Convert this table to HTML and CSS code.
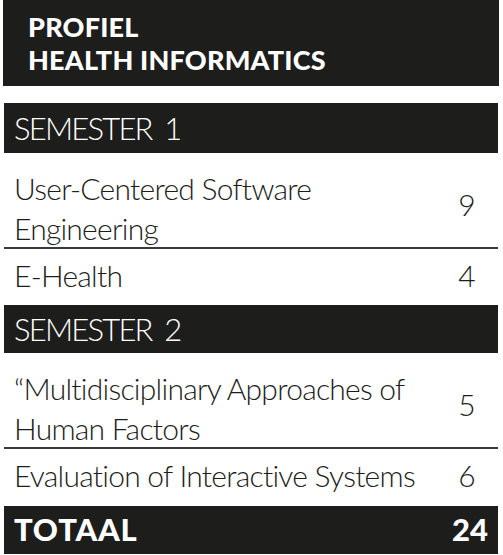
FILE: index.html
```html
<!DOCTYPE html>
<html lang="nl">
<head>
<meta charset="utf-8">
<title>Profiel Health Informatics</title>
<link rel="stylesheet" href="styles.css">
</head>
<body>
  <header class="title">
    <h1>PROFIEL<br>HEALTH INFORMATICS</h1>
  </header>
  <section class="table">
    <div class="semester semester-first">SEMESTER 1</div>
    <div class="row row-tall">
      <span class="course">User-Centered Software<br>Engineering</span>
      <span class="ec">9</span>
    </div>
    <div class="row row-short">
      <span class="course">E-Health</span>
      <span class="ec">4</span>
    </div>
    <div class="semester">SEMESTER 2</div>
    <div class="row row-tall">
      <span class="course">“Multidisciplinary Approaches of<br>Human Factors</span>
      <span class="ec">5</span>
    </div>
    <div class="row row-short">
      <span class="course">Evaluation of Interactive Systems</span>
      <span class="ec">6</span>
    </div>
    <div class="total">
      <span class="total-label">TOTAAL</span>
      <span class="total-ec">24</span>
    </div>
  </section>
</body>
</html>
```

FILE: styles.css
```css
html, body {
  margin: 0;
  padding: 0;
  background: #ffffff;
}

body {
  width: 503px;
  height: 555px;
  overflow: hidden;
  color: #1d1d1b;
  font-family: "Lato", "Liberation Sans", sans-serif;
}

.title {
  margin-left: 3px;
  width: 496px;
  height: 86px;
  background: #1d1d1b;
  box-sizing: border-box;
  padding: 10px 0 0 25px;
}

.title h1 {
  margin: 0;
  color: #ffffff;
  font-weight: 900;
  font-size: 27px;
  line-height: 33px;
  letter-spacing: 0.2px;
}

.table {
  margin: 17px 0 0 4px;
  width: 494px;
}

.semester {
  height: 48px;
  background: #1d1d1b;
  color: #ffffff;
  font-weight: 300;
  font-size: 31px;
  line-height: 48px;
  padding-left: 10px;
  letter-spacing: -1.8px;
  word-spacing: 6px;
}

.semester-first {
  height: 50px;
  line-height: 51px;
}

.row {
  display: flex;
  justify-content: space-between;
  align-items: center;
  box-sizing: border-box;
  padding: 0 20px 0 10px;
  font-weight: 300;
  font-size: 30px;
  letter-spacing: -0.75px;
}

.row-tall {
  height: 96px;
  padding-top: 15px;
  align-items: flex-start;
  line-height: 40px;
  border-bottom: 2px solid #3a3937;
}

.row-tall .ec {
  align-self: center;
  margin-top: -8px;
}

.row-short {
  height: 56px;
  padding-bottom: 4px;
}

.course {
  display: block;
}

.ec {
  width: 22px;
  text-align: center;
  letter-spacing: 0;
}

.total {
  height: 48px;
  margin-top: 1px;
  box-sizing: border-box;
  padding: 0 10px 2px 10px;
  background: #1d1d1b;
  color: #ffffff;
  display: flex;
  align-items: center;
  justify-content: space-between;
  font-weight: 900;
  font-size: 31px;
}

.total-label {
  letter-spacing: 0.8px;
}
```
